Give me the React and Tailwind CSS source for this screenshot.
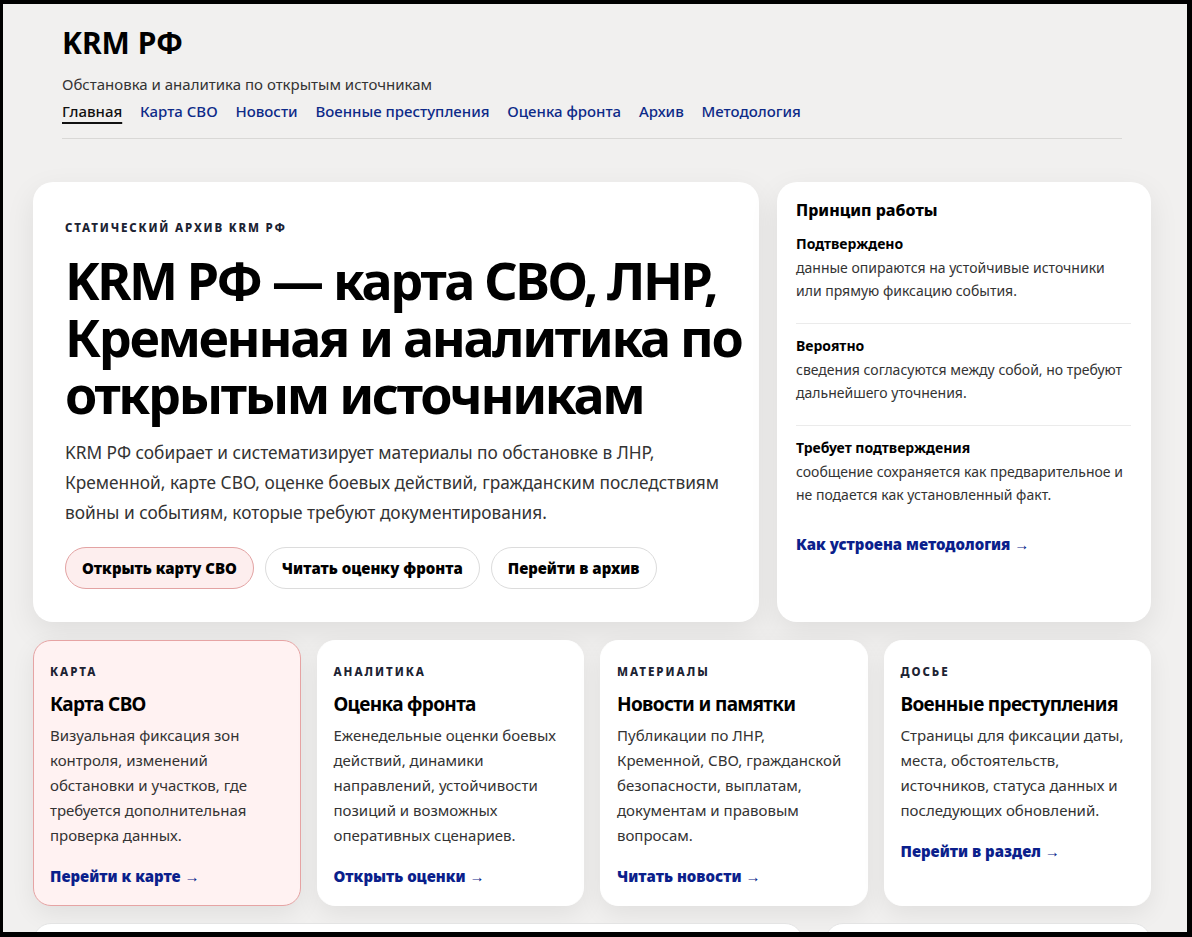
import React from 'react';

const nav = ['Главная', 'Карта СВО', 'Новости', 'Военные преступления', 'Оценка фронта', 'Архив', 'Методология'];

const principles = [
  { title: 'Подтверждено', text: 'данные опираются на устойчивые источники или прямую фиксацию события.' },
  { title: 'Вероятно', text: 'сведения согласуются между собой, но требуют дальнейшего уточнения.' },
  { title: 'Требует подтверждения', text: 'сообщение сохраняется как предварительное и не подается как установленный факт.' },
];

const sections = [
  {
    tag: 'Карта',
    title: 'Карта СВО',
    text: 'Визуальная фиксация зон контроля, изменений обстановки и участков, где требуется дополнительная проверка данных.',
    link: 'Перейти к карте',
    accent: true,
  },
  {
    tag: 'Аналитика',
    title: 'Оценка фронта',
    text: 'Еженедельные оценки боевых действий, динамики направлений, устойчивости позиций и возможных оперативных сценариев.',
    link: 'Открыть оценки',
  },
  {
    tag: 'Материалы',
    title: 'Новости и памятки',
    text: 'Публикации по ЛНР, Кременной, СВО, гражданской безопасности, выплатам, документам и правовым вопросам.',
    link: 'Читать новости',
  },
  {
    tag: 'Досье',
    title: 'Военные преступления',
    text: 'Страницы для фиксации даты, места, обстоятельств, источников, статуса данных и последующих обновлений.',
    link: 'Перейти в раздел',
  },
];

const font = { fontFamily: '"Noto Sans", "Open Sans", sans-serif' };

export default function App() {
  return (
    <div
      style={font}
      className="h-[937px] overflow-hidden border-t-4 border-l-[3px] border-r-[5px] border-b-[5px] border-black bg-[#f1f0ef] text-[#222]"
    >
      {/* Шапка */}
      <header className="ml-[59px] w-[1060px] pt-[21px]">
        <div className="text-[30px] font-bold leading-[36px] text-black">KRM РФ</div>
        <p className="mt-[11px] text-[15px] leading-6 text-[#333]">Обстановка и аналитика по открытым источникам</p>
        <nav className="mt-[3px] flex gap-[17.8px] border-b border-[#d9d8d6] pb-[15px] text-[15px] font-medium leading-6">
          {nav.map((item, i) => (
            <a
              key={item}
              className={i === 0 ? 'text-[#111] underline decoration-[1.5px] underline-offset-[5px]' : 'text-[#0d2a88]'}
            >
              {item}
            </a>
          ))}
        </nav>
      </header>

      <main className="ml-[30px] mt-[43px] w-[1118px]">
        <div className="grid grid-cols-[726px_1fr] gap-[18px]">
          {/* Главный блок */}
          <section className="rounded-[20px] bg-white pb-[33px] pl-[32px] pr-[16px] pt-[38px] shadow-[0_10px_30px_rgba(0,0,0,0.08)]">
            <div className="text-[11.5px] font-extrabold uppercase leading-4 tracking-[0.16em] text-[#1c2333]">
              Статический архив KRM РФ
            </div>
            <h1 className="mt-[15px] text-[52px] font-bold leading-[57px] tracking-[-0.045em] text-black">
              KRM РФ — карта СВО, ЛНР, Кременная и аналитика по открытым источникам
            </h1>
            <p className="mt-[16px] pr-[16px] text-[17.3px] leading-[30px] text-[#333]">
              KRM РФ собирает и систематизирует материалы по обстановке в ЛНР, Кременной, карте СВО, оценке боевых
              действий, гражданским последствиям войны и событиям, которые требуют документирования.
            </p>
            <div className="mt-[19px] flex gap-[11px]">
              <a className="flex h-[42px] items-center rounded-full border border-[#e3a3a3] bg-[#fdeeee] px-[16px] text-[15px] font-black text-black">
                Открыть карту СВО
              </a>
              <a className="flex h-[42px] items-center rounded-full border border-[#dcdcdc] bg-white px-[16px] text-[15px] font-black text-black">
                Читать оценку фронта
              </a>
              <a className="flex h-[42px] items-center rounded-full border border-[#dcdcdc] bg-white px-[16px] text-[15px] font-black text-black">
                Перейти в архив
              </a>
            </div>
          </section>

          {/* Принцип работы */}
          <aside className="rounded-[20px] bg-white pb-[20px] pl-[19px] pr-[20px] pt-[17px] shadow-[0_10px_30px_rgba(0,0,0,0.08)]">
            <h2 className="text-[16px] font-extrabold leading-[23px] text-black">Принцип работы</h2>
            {principles.map((p, i) => (
              <div
                key={p.title}
                className={'pt-[11px] pb-[21px] ' + (i < principles.length - 1 ? 'border-b border-[#ebebeb]' : '')}
              >
                <div className="text-[14px] font-bold leading-[22px] text-black">{p.title}</div>
                <p className="mt-[1px] text-[14px] leading-[23px] text-[#333]">{p.text}</p>
              </div>
            ))}
            <a className="mt-[6px] block text-[15px] font-black leading-[22px] text-[#0b1f8c]">Как устроена методология →</a>
          </aside>
        </div>

        {/* Разделы */}
        <div className="mt-[18px] grid grid-cols-4 gap-[16px]">
          {sections.map((s) => (
            <div
              key={s.title}
              className={
                'rounded-[18px] border px-[16px] pb-[18px] pt-[23px] shadow-[0_8px_24px_rgba(0,0,0,0.07)] ' +
                (s.accent ? 'border-[#e6a4a4] bg-[#fff2f2]' : 'border-white bg-white')
              }
            >
              <div className="text-[11.5px] font-extrabold uppercase leading-4 tracking-[0.17em] text-[#1c2333]">{s.tag}</div>
              <h3 className="mt-[11px] text-[19px] font-bold leading-[26px] tracking-[-0.035em] text-black">{s.title}</h3>
              <p className="mt-[6px] text-[15px] leading-[25px] text-[#333]">{s.text}</p>
              <a className="mt-[17px] block text-[15px] font-black leading-[22px] text-[#0b1f8c]">{s.link} →</a>
            </div>
          ))}
        </div>

        <div className="mt-[17px] grid grid-cols-[770px_1fr] gap-[22px]">
          <div className="h-[200px] rounded-[18px] border border-[#e4e4e4] bg-white" />
          <div className="h-[200px] rounded-[18px] border border-[#e4e4e4] bg-white" />
        </div>
      </main>
    </div>
  );
}
